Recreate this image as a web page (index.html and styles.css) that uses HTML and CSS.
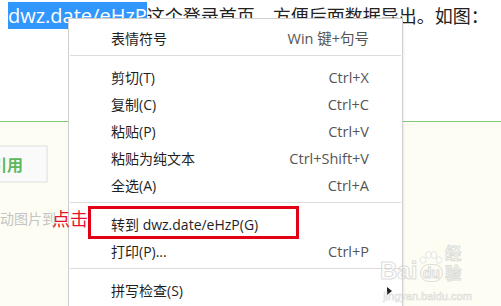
FILE: index.html
```html
<!DOCTYPE html>
<html lang="zh">
<head>
<meta charset="utf-8">
<link rel="stylesheet" href="styles.css">
</head>
<body>
<div class="page">
  <div class="top">
    <p class="lead"><span class="sel">dwz.date/eHzP</span>这个登录首页，方便后面数据导出。如图：</p>
  </div>
  <div class="bottom">
    <div class="btn"><span class="btn-text">引用</span></div>
    <div class="hint">动图片到</div>
  </div>

  <div class="menu">
    <div class="item"><span>表情符号</span><span class="key">Win 键+句号</span></div>
    <div class="sep"></div>
    <div class="item"><span>剪切(T)</span><span class="key">Ctrl+X</span></div>
    <div class="item"><span>复制(C)</span><span class="key">Ctrl+C</span></div>
    <div class="item"><span>粘贴(P)</span><span class="key">Ctrl+V</span></div>
    <div class="item"><span>粘贴为纯文本</span><span class="key">Ctrl+Shift+V</span></div>
    <div class="item"><span>全选(A)</span><span class="key">Ctrl+A</span></div>
    <div class="sep"></div>
    <div class="item"><span>转到 dwz.date/eHzP(G)</span></div>
    <div class="item"><span>打印(P)...</span><span class="key">Ctrl+P</span></div>
    <div class="sep"></div>
    <div class="item"><span>拼写检查(S)</span><span class="arrow"></span></div>
  </div>

  <div class="note">点击</div>
  <div class="redbox"></div>

  <div class="watermark">
    <div class="wm-row">
      <span class="wm-bai">Bai</span>
      <span class="wm-du">
        <svg class="paw" width="24" height="13" viewBox="0 0 24 13">
          <ellipse cx="4" cy="9" rx="2.8" ry="3.2" fill="#fff" stroke="#d6d6d6"/>
          <ellipse cx="9.5" cy="4" rx="2.8" ry="3.4" fill="#fff" stroke="#d6d6d6"/>
          <ellipse cx="15" cy="4" rx="2.8" ry="3.4" fill="#fff" stroke="#d6d6d6"/>
          <ellipse cx="20" cy="9" rx="2.8" ry="3.2" fill="#fff" stroke="#d6d6d6"/>
        </svg>
        <span class="du">du</span>
      </span>
      <span class="wm-jy">经验</span>
    </div>
    <div class="wm-url">jingyan.baidu.com</div>
  </div>
</div>
</body>
</html>
```

FILE: styles.css
```css
html, body {
  margin: 0;
  padding: 0;
}
body {
  width: 501px;
  height: 306px;
  overflow: hidden;
  font-family: "Open Sans", "Noto Sans CJK SC", sans-serif;
}
.page {
  position: relative;
  width: 501px;
  height: 306px;
  overflow: hidden;
  background: #fdfdf3;
}
.top {
  height: 122px;
  box-sizing: border-box;
  background: #fff;
  border-bottom: 1px solid #7fc97a;
}
.lead {
  margin: 0;
  padding: 3px 0 0 8px;
  font-size: 18px;
  line-height: 26px;
  color: #222;
  white-space: nowrap;
}
.sel {
  font-size: 20px;
  background: #3297fd;
  color: #fff;
}
.bottom {
  display: flex;
  flex-direction: column;
  padding-top: 23px;
}
.btn {
  width: 48px;
  height: 38px;
  box-sizing: border-box;
  border: 2px solid #ececec;
  border-left: none;
  background: #fafafa;
  overflow: hidden;
  display: flex;
  justify-content: flex-end;
  align-items: center;
}
.btn-text {
  font-family: "Noto Sans CJK SC", sans-serif;
  font-size: 16px;
  font-weight: bold;
  color: #5cb85c;
  padding-right: 23px;
  white-space: nowrap;
  flex-shrink: 0;
}
.hint {
  margin-top: 25px;
  font-family: "Noto Sans CJK SC", sans-serif;
  font-size: 14px;
  line-height: 20px;
  color: #c4c4c4;
  white-space: nowrap;
}
.note {
  position: absolute;
  left: 52px;
  top: 206px;
  font-family: "Noto Sans CJK SC", sans-serif;
  font-size: 18px;
  line-height: 24px;
  color: #e8102c;
}
.menu {
  position: absolute;
  left: 68px;
  top: 18px;
  width: 335px;
  height: 320px;
  box-sizing: border-box;
  background: #fff;
  border: 1px solid #cfcfcf;
  box-shadow: 1px 1px 2px rgba(0,0,0,0.08);
  padding-top: 6px;
  display: flex;
  flex-direction: column;
}
.item {
  height: 27px;
  line-height: 27px;
  display: flex;
  justify-content: space-between;
  align-items: center;
  padding: 0 33px 0 42px;
  font-size: 14px;
  color: #1f1f1f;
  white-space: nowrap;
}
.key {
  color: #555;
  font-size: 14.5px;
}
.sep {
  height: 1px;
  background: #dcdcdc;
  margin: 3px 1px 8px 1px;
}
.arrow {
  width: 0;
  height: 0;
  border-top: 4px solid transparent;
  border-bottom: 4px solid transparent;
  border-left: 5px solid #222;
  margin-right: -23px;
}
.redbox {
  position: absolute;
  left: 88px;
  top: 206px;
  width: 211px;
  height: 33px;
  box-sizing: border-box;
  border: 3px solid #e30016;
}
.watermark {
  position: absolute;
  left: 380px;
  top: 242px;
  width: 95px;
  display: flex;
  flex-direction: column;
  align-items: center;
  opacity: 0.6;
}
.wm-row {
  display: flex;
  align-items: flex-end;
}
.wm-bai, .du, .wm-jy {
  color: #fff;
  -webkit-text-stroke: 1px #c8c8c8;
  font-weight: bold;
}
.wm-bai {
  font-family: "Liberation Sans", sans-serif;
  font-size: 24px;
  line-height: 22px;
}
.wm-du {
  display: flex;
  flex-direction: column;
  align-items: center;
  margin: 0 2px;
}
.paw { display: block; }
.du {
  font-family: "Liberation Sans", sans-serif;
  font-size: 14px;
  line-height: 16px;
  border: 1px solid #c8c8c8;
  border-radius: 9px;
  padding: 0 2px;
}
.wm-jy {
  font-family: "Noto Sans CJK SC", sans-serif;
  font-size: 16px;
  line-height: 20px;
}
.wm-url {
  font-family: "Liberation Sans", sans-serif;
  font-size: 11px;
  line-height: 14px;
  margin-top: 7px;
  color: #fff;
  -webkit-text-stroke: 0.6px #c8c8c8;
}
```
